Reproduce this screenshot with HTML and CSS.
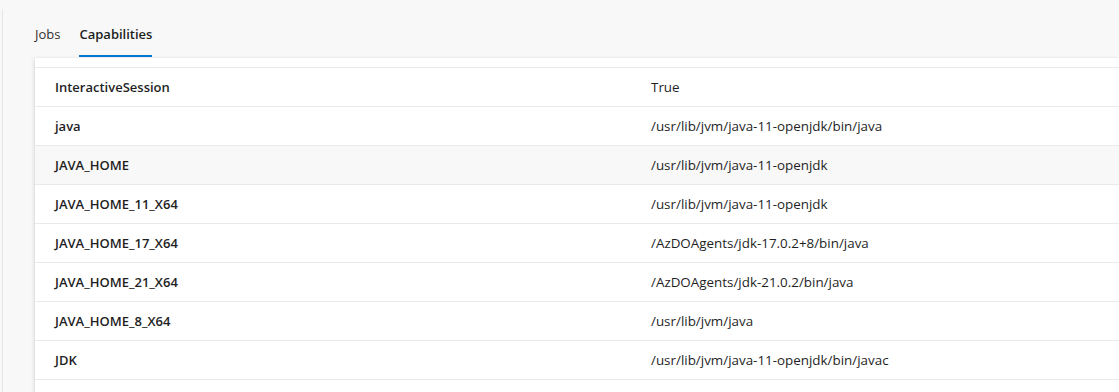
FILE: index.html
```html
<!DOCTYPE html>
<html lang="en">
<head>
    <meta charset="UTF-8">
    <meta name="viewport" content="width=device-width, initial-scale=1.0">
    <title>Agent Capabilities</title>
    <link rel="stylesheet" href="styles.css">
</head>
<body>
    <div class="panel">
        <div class="tabs">
            <div class="tab">Jobs</div>
            <div class="tab active">Capabilities</div>
        </div>

        <div class="card">
            <div class="table-head"></div>
            <div class="row">
                <div class="cell name">InteractiveSession</div>
                <div class="cell value">True</div>
            </div>
            <div class="row">
                <div class="cell name">java</div>
                <div class="cell value">/usr/lib/jvm/java-11-openjdk/bin/java</div>
            </div>
            <div class="row hover">
                <div class="cell name">JAVA_HOME</div>
                <div class="cell value">/usr/lib/jvm/java-11-openjdk</div>
            </div>
            <div class="row">
                <div class="cell name">JAVA_HOME_11_X64</div>
                <div class="cell value">/usr/lib/jvm/java-11-openjdk</div>
            </div>
            <div class="row">
                <div class="cell name">JAVA_HOME_17_X64</div>
                <div class="cell value">/AzDOAgents/jdk-17.0.2+8/bin/java</div>
            </div>
            <div class="row">
                <div class="cell name">JAVA_HOME_21_X64</div>
                <div class="cell value">/AzDOAgents/jdk-21.0.2/bin/java</div>
            </div>
            <div class="row">
                <div class="cell name">JAVA_HOME_8_X64</div>
                <div class="cell value">/usr/lib/jvm/java</div>
            </div>
            <div class="row">
                <div class="cell name">JDK</div>
                <div class="cell value">/usr/lib/jvm/java-11-openjdk/bin/javac</div>
            </div>
        </div>
    </div>
</body>
</html>
```

FILE: styles.css
```css
* {
    margin: 0;
    padding: 0;
    box-sizing: border-box;
}
html, body {
    height: 100%;
    overflow: hidden;
}
body {
    background-color: #f8f8f8;
    font-family: "Open Sans", sans-serif;
    font-size: 13px;
    color: #1f1f1f;
    padding: 9px 0 0 2px;
}
.panel {
    display: flex;
    flex-direction: column;
    border-left: 1px solid #e6e6e6;
    padding-left: 32px;
    height: 100%;
}
.tabs {
    display: flex;
    gap: 19px;
    height: 48px;
    flex-shrink: 0;
}
.tab {
    display: flex;
    align-items: center;
    font-size: 13px;
    color: #323130;
    border-bottom: 2px solid transparent;
    padding-top: 3px;
}
.tab.active {
    font-weight: 600;
    color: #201f1e;
    border-bottom-color: #0078d4;
}
.card {
    flex: 1;
    margin-top: 1px;
    overflow: hidden;
    background: white;
    box-shadow: -1px 1px 4px rgba(0, 0, 0, 0.12), 0 0 1px rgba(0, 0, 0, 0.08);
}
.table-head {
    height: 10px;
    border-bottom: 1px solid #eaeaea;
}
.row {
    display: grid;
    grid-template-columns: 596px 1fr;
    height: 39px;
    border-bottom: 1px solid #eaeaea;
    align-items: center;
}
.row.hover {
    background-color: #f8f8f8;
}
.cell {
    padding-left: 20px;
    white-space: nowrap;
}
.cell.name {
    font-weight: 600;
}
.cell.value {
    font-size: 13.4px;
}
```
